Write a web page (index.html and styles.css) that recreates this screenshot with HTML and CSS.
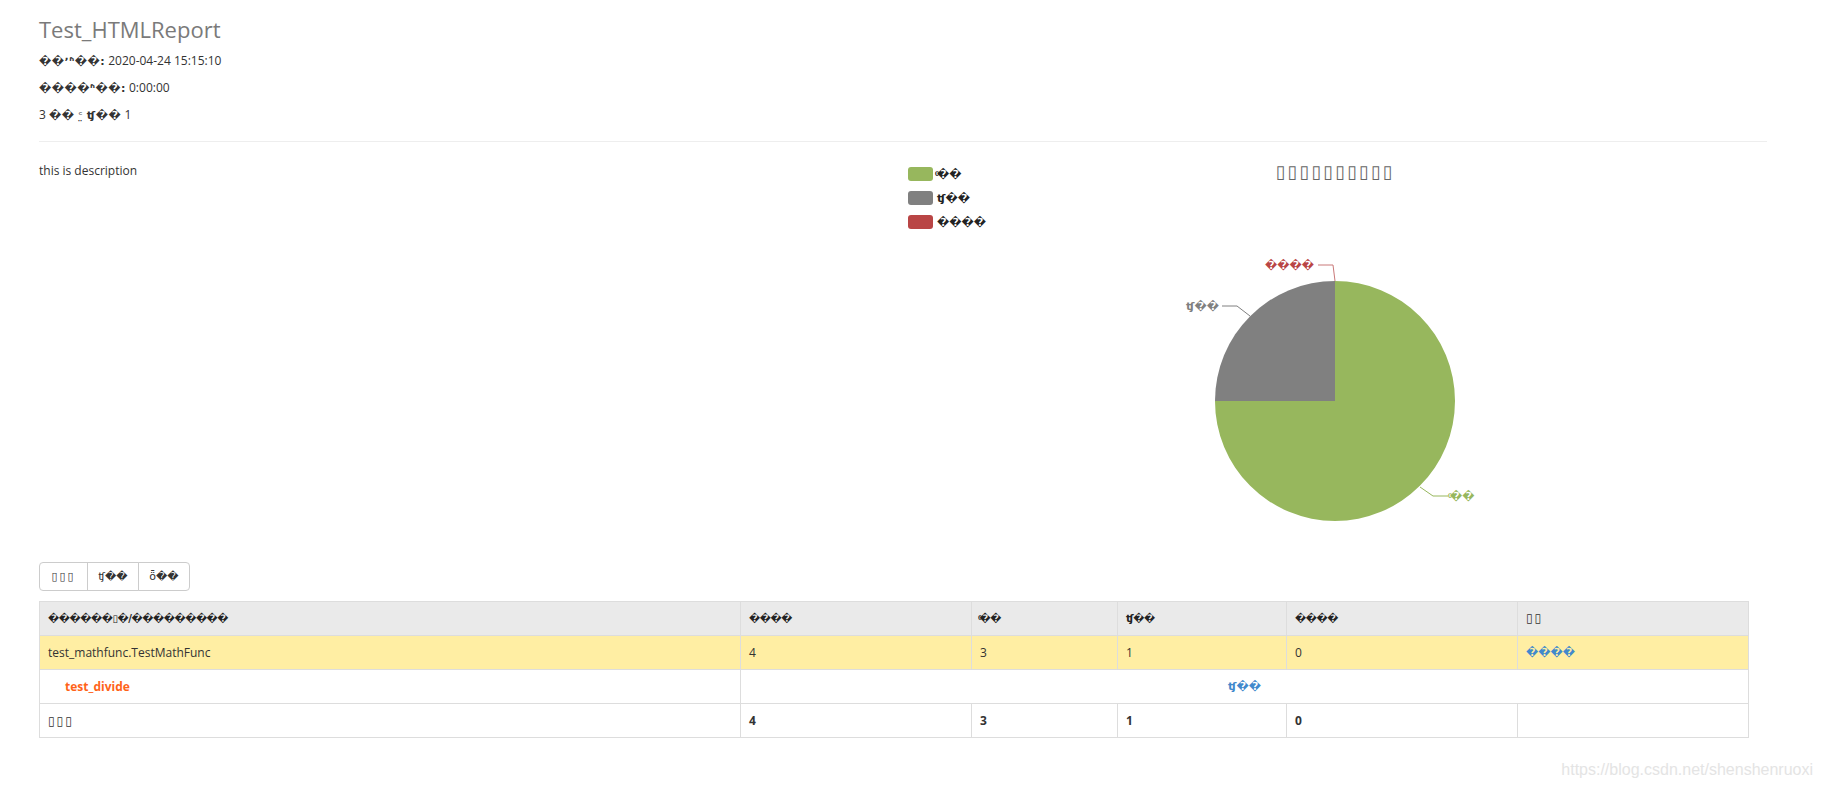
FILE: index.html
```html
<!DOCTYPE html>
<html>
<head>
<meta charset="utf-8">
<title>Test_HTMLReport</title>
<link rel="stylesheet" href="styles.css">
</head>
<body>
<div class="page">
  <div class="heading">
    <h1 class="title">Test_HTMLReport</h1>
    <p class="attr"><strong>��ʼʱ��:</strong> 2020-04-24 15:15:10</p>
    <p class="attr"><strong>����ʱ��:</strong> 0:00:00</p>
    <p class="attr">3 <strong>��</strong> <span class="mark">ᶜ̤</span> <strong>ʧ��</strong> 1</p>
  </div>
  <hr class="rule">
  <div class="overview">
    <div class="desc">this is description</div>
    <div class="chart">
      <ul class="legend">
        <li class="legend-item"><span class="swatch pass"></span><span class="legend-text">ͨ��</span></li>
        <li class="legend-item"><span class="swatch fail"></span><span class="legend-text">ʧ��</span></li>
        <li class="legend-item"><span class="swatch error"></span><span class="legend-text">����</span></li>
      </ul>
      <svg class="pie" width="659" height="400" viewBox="0 0 659 400" xmlns="http://www.w3.org/2000/svg">
        <text class="chart-title" x="227" y="29" text-anchor="middle">▯▯▯▯▯▯▯▯▯▯</text>
        <path d="M227,252 L227,132 A120,120 0 1 1 107,252 Z" fill="#97b75d"/>
        <path d="M227,252 L107,252 A120,120 0 0 1 227,132 Z" fill="#808080"/>
        <polyline points="227,132 225,116 210,116" fill="none" stroke="#c97878" stroke-width="1"/>
        <text class="pie-label" x="206" y="120" text-anchor="end" fill="#b94545">����</text>
        <polyline points="142,167 129,157 114,157" fill="none" stroke="#808080" stroke-width="1"/>
        <text class="pie-label" x="111" y="161" text-anchor="end" fill="#808080">ʧ��</text>
        <polyline points="312,338 325,347 340,347" fill="none" stroke="#97b75d" stroke-width="1"/>
        <text class="pie-label" x="342" y="351" fill="#97b75d">ͨ��</text>
      </svg>
    </div>
  </div>
  <div class="btn-group">
    <button class="btn btn-first">▯▯▯</button>
    <button class="btn">ʧ��</button>
    <button class="btn btn-last">ȫ��</button>
  </div>
  <table class="result">
    <colgroup>
      <col class="c1"><col class="c2"><col class="c3"><col class="c4"><col class="c5"><col class="c6">
    </colgroup>
    <tr class="head-row">
      <th>������▯�/���������</th>
      <th>����</th>
      <th>ͨ��</th>
      <th>ʧ��</th>
      <th>����</th>
      <th><span class="tofu">▯▯</span></th>
    </tr>
    <tr class="class-row">
      <td>test_mathfunc.TestMathFunc</td>
      <td>4</td>
      <td>3</td>
      <td>1</td>
      <td>0</td>
      <td><a class="link">����</a></td>
    </tr>
    <tr class="case-row">
      <td><span class="case-name">test_divide</span></td>
      <td colspan="5" class="case-status"><a class="link">ʧ��</a></td>
    </tr>
    <tr class="total-row">
      <td><span class="tofu">▯▯▯</span></td>
      <td>4</td>
      <td>3</td>
      <td>1</td>
      <td>0</td>
      <td></td>
    </tr>
  </table>
</div>
<div class="watermark">https://blog.csdn.net/shenshenruoxi</div>
</body>
</html>
```
FILE: styles.css
```css
html, body {
  margin: 0;
  padding: 0;
  background: #fff;
}
body {
  font-family: "Open Sans", "DejaVu Sans", sans-serif;
  font-size: 12px;
  color: #333;
  width: 1821px;
  height: 789px;
  overflow: hidden;
  position: relative;
}
.page {
  padding: 0 54px 0 39px;
}
.title {
  font-size: 22px;
  font-weight: normal;
  line-height: 30px;
  color: #7a7a7a;
  margin: 14px 0 8px;
}
.attr {
  margin: 0 0 9px;
  line-height: 17px;
}
.attr strong {
  font-weight: bold;
  font-family: "DejaVu Sans", sans-serif;
  font-size: 11px;
  letter-spacing: 0.5px;
}
.mark {
  font-family: "DejaVu Sans", sans-serif;
  font-size: 11px;
  margin: 0 1px;
}
.rule {
  border: 0;
  border-top: 1px solid #eee;
  margin: 17px 0 7px;
}
.overview {
  display: flex;
  height: 400px;
}
.desc {
  width: 869px;
  padding-top: 13px;
  line-height: 17px;
}
.chart {
  display: flex;
  flex: 1;
}
.legend {
  list-style: none;
  margin: 0;
  padding: 18px 0 0;
  width: 200px;
}
.legend-item {
  display: flex;
  align-items: center;
  height: 14px;
  margin-bottom: 10px;
}
.swatch {
  width: 25px;
  height: 14px;
  border-radius: 3px;
  margin-right: 4px;
}
.swatch.pass { background: #97b75d; }
.swatch.fail { background: #808080; }
.swatch.error { background: #b94545; }
.legend-text {
  font-family: "DejaVu Sans", sans-serif;
  font-size: 11px;
  font-weight: bold;
  color: #222;
}
.chart-title {
  font-family: "DejaVu Sans", sans-serif;
  font-size: 18px;
  fill: #666;
  letter-spacing: 2px;
}
.pie-label {
  font-family: "DejaVu Sans", sans-serif;
  font-size: 11px;
  font-weight: bold;
}
.btn-group {
  display: flex;
  margin-top: 13px;
  width: max-content;
}
.btn {
  font-family: "DejaVu Sans", sans-serif;
  font-size: 11px;
  color: #333;
  background: #fff;
  border: 1px solid #ccc;
  height: 29px;
  width: 52px;
  padding: 0;
  margin-left: -1px;
  text-align: center;
}
.btn-first {
  margin-left: 0;
  border-radius: 4px 0 0 4px;
  width: 49px;
  letter-spacing: 2px;
}
.btn-last {
  border-radius: 0 4px 4px 0;
}
.result {
  margin-top: 10px;
  width: 1709px;
  border-collapse: collapse;
  table-layout: fixed;
  font-size: 12px;
}
.c1 { width: 701px; }
.c2 { width: 231px; }
.c3 { width: 146px; }
.c4 { width: 169px; }
.c5 { width: 231px; }
.c6 { width: 231px; }
.result tr {
  height: 34px;
}
.result th, .result td {
  border: 1px solid #ddd;
  padding: 0 8px;
  line-height: 16px;
  text-align: left;
  vertical-align: middle;
}
.head-row th {
  background: #eaeaea;
  font-family: "DejaVu Sans", sans-serif;
  font-size: 10px;
  font-weight: bold;
  letter-spacing: -0.4px;
  color: #222;
}
.tofu {
  font-family: "DejaVu Sans", sans-serif;
  font-size: 12px;
  font-weight: normal;
  letter-spacing: 2px;
  color: #333;
}
.class-row td {
  background: #ffeea3;
}
.case-name {
  padding-left: 17px;
  font-weight: bold;
  color: #ff6319;
}
.result td.case-status {
  text-align: center;
}
.link {
  color: #4189cc;
  font-family: "DejaVu Sans", sans-serif;
  font-size: 11px;
  font-weight: bold;
}
.total-row td {
  font-weight: bold;
}
.watermark {
  position: absolute;
  right: 8px;
  bottom: 10px;
  font-family: "Liberation Sans", sans-serif;
  font-size: 16px;
  line-height: 18px;
  color: #e4e4e4;
}
```
